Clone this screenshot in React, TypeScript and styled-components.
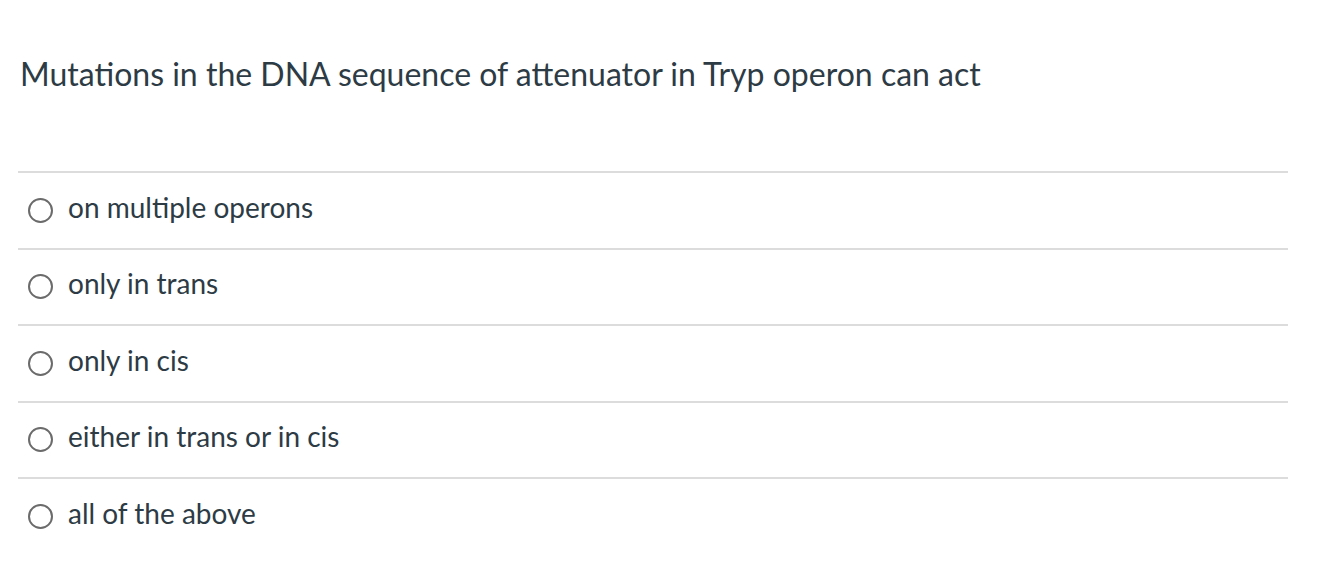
import React from "react";
import styled, { createGlobalStyle } from "styled-components";

const Global = createGlobalStyle`
  html, body { margin: 0; padding: 0; background: #fff; }
  body { font-family: Lato, "Open Sans", sans-serif; color: #2d3b45; }
`;

const Page = styled.div`
  padding: 0 30px 0 18px;
`;

const Question = styled.div`
  font-size: 32px;
  line-height: 40px;
  padding: 54px 0 0 2px;
  height: 171px;
  box-sizing: border-box;
`;

const Answers = styled.div`
  display: flex;
  flex-direction: column;
`;

const Row = styled.label`
  display: flex;
  align-items: center;
  height: 76.5px;
  box-sizing: border-box;
  border-top: 2px solid #dcdcdc;
  padding-left: 10px;
  gap: 15px;
  font-size: 28px;
`;

const Radio = styled.span`
  width: 21px;
  height: 21px;
  border: 2px solid #6b6b6b;
  border-radius: 50%;
  flex: none;
`;

const Text = styled.span`
  line-height: 1;
  margin-bottom: 7px;
`;

const answers = [
  "on multiple operons",
  "only in trans",
  "only in cis",
  "either in trans or in cis",
  "all of the above",
];

export default function App() {
  return (
    <>
      <Global />
      <Page>
        <Question>Mutations in the DNA sequence of attenuator in Tryp operon can act</Question>
        <Answers>
          {answers.map((a) => (
            <Row key={a}>
              <Radio />
              <Text>{a}</Text>
            </Row>
          ))}
        </Answers>
      </Page>
    </>
  );
}
